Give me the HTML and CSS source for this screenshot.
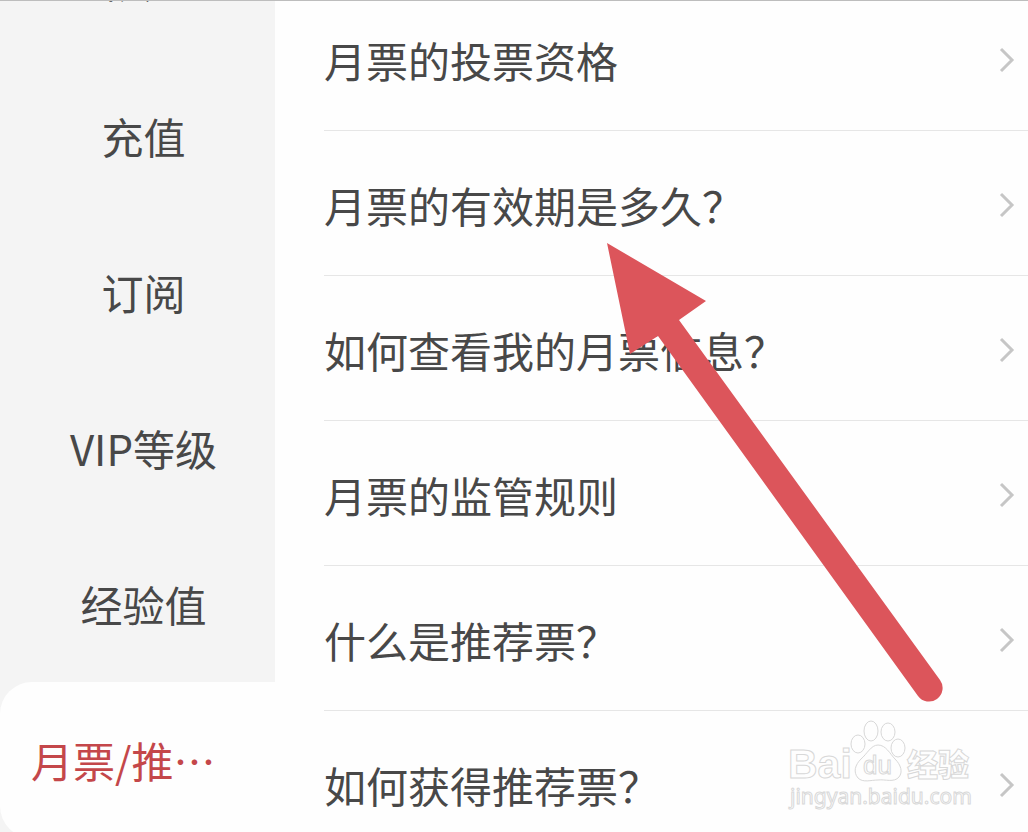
FILE: index.html
```html
<!DOCTYPE html>
<html lang="zh-CN">
<head>
<meta charset="utf-8">
<meta name="viewport" content="width=device-width, initial-scale=1">
<title>帮助中心</title>
<link rel="stylesheet" href="styles.css">
</head>
<body>
<div class="page">
  <nav class="sidebar" aria-label="分类">
    <a class="tab" href="#account">帐户</a>
    <a class="tab" href="#recharge">充值</a>
    <a class="tab" href="#subscribe">订阅</a>
    <a class="tab" href="#vip">VIP等级</a>
    <a class="tab" href="#exp">经验值</a>
    <a class="tab tab-active" href="#ticket" aria-current="page">月票/推…</a>
  </nav>
  <main class="list">
    <a class="row" href="#q1"><span>月票的投票资格</span><svg class="chevron" viewBox="0 0 16 28" aria-hidden="true"><path d="M2 3 L13 14 L2 25"/></svg></a>
    <a class="row" href="#q2"><span>月票的有效期是多久？</span><svg class="chevron" viewBox="0 0 16 28" aria-hidden="true"><path d="M2 3 L13 14 L2 25"/></svg></a>
    <a class="row" href="#q3"><span>如何查看我的月票信息？</span><svg class="chevron" viewBox="0 0 16 28" aria-hidden="true"><path d="M2 3 L13 14 L2 25"/></svg></a>
    <a class="row" href="#q4"><span>月票的监管规则</span><svg class="chevron" viewBox="0 0 16 28" aria-hidden="true"><path d="M2 3 L13 14 L2 25"/></svg></a>
    <a class="row" href="#q5"><span>什么是推荐票？</span><svg class="chevron" viewBox="0 0 16 28" aria-hidden="true"><path d="M2 3 L13 14 L2 25"/></svg></a>
    <a class="row" href="#q6"><span>如何获得推荐票？</span><svg class="chevron" viewBox="0 0 16 28" aria-hidden="true"><path d="M2 3 L13 14 L2 25"/></svg></a>
  </main>
  <svg class="arrow" viewBox="0 0 338 460" aria-hidden="true">
    <path d="M1 1 L100 59 L73 78 L334 438 A13.500 13.500 0 0 1 312 454 L52 94 L24 112 Z"/>
  </svg>
  <svg class="watermark" viewBox="0 0 190 94" role="img" aria-label="Baidu 经验">
    <text class="mark-latin" x="2" y="58">Bai</text>
    <text class="mark-cjk" x="121" y="56">经验</text>
    <text class="mark-url" x="4" y="84">jingyan.baidu.com</text>
    <ellipse cx="72" cy="24" rx="7" ry="9"/>
    <ellipse cx="85" cy="11" rx="7" ry="10"/>
    <ellipse cx="102" cy="12" rx="7" ry="9"/>
    <ellipse cx="112" cy="28" rx="7" ry="9"/>
    <path d="M92 25 C100 25 104 34 109 39 C115 45 117 52 113 57 C108 63 99 59 92 60 C85 60 77 63 72 58 C67 52 69 45 75 39 C81 34 85 25 92 25 Z"/>
    <text class="mark-du" x="77" y="54">du</text>
  </svg>
</div>
</body>
</html>
```
FILE: styles.css
```css
* {
  box-sizing: border-box;
}

body {
  margin: 0;
  background: #fefefe;
  color: #484848;
  font-family: "Noto Sans CJK SC", sans-serif;
  font-size: 42px;
  line-height: 60px;
}

.page {
  position: relative;
  display: flex;
  height: 100vh;
  overflow: hidden;
  border-top: 1px solid #bdbdbd;
}

.sidebar {
  flex: none;
  width: 275px;
  height: max-content;
  margin-top: -99px;
  background: #f4f4f4;
}

.tab {
  display: flex;
  align-items: center;
  justify-content: center;
  height: 156px;
  padding-left: 12px;
  color: inherit;
  text-decoration: none;
  white-space: nowrap;
}

.tab-active {
  justify-content: flex-start;
  padding-left: 31px;
  border-radius: 32px 0 0 32px;
  background: #fefefe;
  color: #c4474a;
}

.list {
  flex: 1;
  min-width: 0;
  margin-top: -15px;
  padding-left: 49px;
}

.row {
  display: flex;
  align-items: center;
  justify-content: space-between;
  height: 145px;
  padding: 4px 13px 0 0;
  border-bottom: 1px solid #e6e6e6;
  color: inherit;
  text-decoration: none;
  white-space: nowrap;
}

.chevron {
  flex: none;
  width: 16px;
  height: 28px;
  fill: none;
  stroke: #c6c6c6;
  stroke-width: 3;
}

.arrow {
  position: absolute;
  top: 241px;
  left: 606px;
  width: 338px;
  height: 460px;
  fill: #dc555b;
  pointer-events: none;
}

.watermark {
  position: absolute;
  right: 52px;
  bottom: 18px;
  width: 190px;
  height: 94px;
  overflow: visible;
  fill: #fefefe;
  stroke: #d8d8d8;
  stroke-width: 1;
  pointer-events: none;
}

.mark-latin {
  font: bold 41px "Liberation Sans", sans-serif;
}

.mark-cjk {
  font: 900 31px "Noto Sans CJK SC", sans-serif;
}

.mark-du {
  font: 26px "Liberation Sans", sans-serif;
}

.mark-url {
  font: 21px "Noto Sans", sans-serif;
}
```
